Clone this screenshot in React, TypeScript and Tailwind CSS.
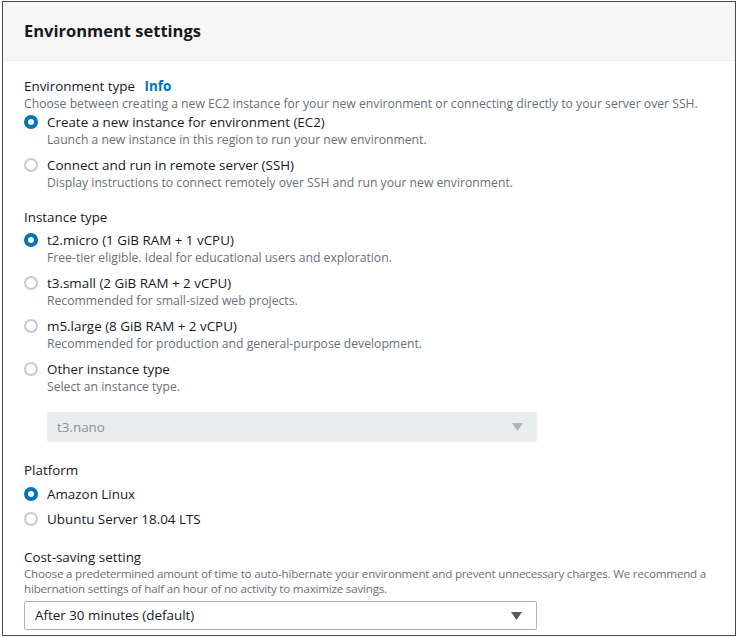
import React from 'react';

type Opt = { label: string; desc?: string; checked?: boolean };

const Radio: React.FC<{ checked?: boolean }> = ({ checked }) =>
  checked ? (
    <span className="mt-[3px] w-[14px] h-[14px] rounded-full bg-[#0073bb] flex items-center justify-center shrink-0">
      <span className="w-[6px] h-[6px] rounded-full bg-white" />
    </span>
  ) : (
    <span className="mt-[3px] w-[14px] h-[14px] rounded-full border-2 border-[#c5ccd0] bg-white shrink-0" />
  );

const RadioItem: React.FC<Opt> = ({ label, desc, checked }) => (
  <div className="flex items-start gap-[9px]">
    <Radio checked={checked} />
    <div>
      <div className="text-[13.4px] leading-[20px] text-[#16191f]">{label}</div>
      {desc && <div className="text-[12.2px] leading-[15px] text-[#687078]">{desc}</div>}
    </div>
  </div>
);

const Arrow: React.FC<{ color: string }> = ({ color }) => (
  <svg width="11" height="8" viewBox="0 0 11 8">
    <path d="M0 0 L11 0 L5.5 8 Z" fill={color} />
  </svg>
);

const App: React.FC = () => {
  return (
    <div className="w-[737px] h-[638px] bg-white pt-[1px] pl-[2px]" style={{ fontFamily: '"Open Sans", sans-serif' }}>
      <div className="w-[734px] h-[635px] border border-[#4a4a4a] overflow-hidden">
        <div className="h-[59px] bg-[#f7f7f7] border-b border-[#eaeded] px-[21px] flex items-center">
          <h1 className="text-[16.5px] font-bold text-[#16191f]">Environment settings</h1>
        </div>

        <div className="pl-[21px] pr-[12px] pt-[15px]">
          {/* Environment type */}
          <div className="text-[13.4px] leading-[20px] text-[#16191f]">
            Environment type <span className="ml-[6px] font-bold text-[#0073bb]">Info</span>
          </div>
          <div className="text-[12.2px] leading-[15px] text-[#687078]">
            Choose between creating a new EC2 instance for your new environment or connecting directly to your server over SSH.
          </div>
          <div className="mt-[1px] flex flex-col gap-[8px]">
            <RadioItem checked label="Create a new instance for environment (EC2)" desc="Launch a new instance in this region to run your new environment." />
            <RadioItem label="Connect and run in remote server (SSH)" desc="Display instructions to connect remotely over SSH and run your new environment." />
          </div>

          {/* Instance type */}
          <div className="mt-[17px] text-[13.4px] leading-[20px] text-[#16191f]">Instance type</div>
          <div className="mt-[3px] flex flex-col gap-[8px]">
            <RadioItem checked label="t2.micro (1 GiB RAM + 1 vCPU)" desc="Free-tier eligible. Ideal for educational users and exploration." />
            <RadioItem label="t3.small (2 GiB RAM + 2 vCPU)" desc="Recommended for small-sized web projects." />
            <RadioItem label="m5.large (8 GiB RAM + 2 vCPU)" desc="Recommended for production and general-purpose development." />
            <RadioItem label="Other instance type" desc="Select an instance type." />
          </div>
          <div className="mt-[18px] ml-[23px] w-[490px] h-[30px] bg-[#eaeded] rounded-[2px] flex items-center justify-between pl-[10px] pr-[14px]">
            <span className="text-[13.4px] text-[#879596]">t3.nano</span>
            <Arrow color="#aab7b8" />
          </div>

          {/* Platform */}
          <div className="mt-[18px] text-[13.4px] leading-[20px] text-[#16191f]">Platform</div>
          <div className="mt-[4px] flex flex-col gap-[5px]">
            <RadioItem checked label="Amazon Linux" />
            <RadioItem label="Ubuntu Server 18.04 LTS" />
          </div>

          {/* Cost-saving */}
          <div className="mt-[19px] text-[13.4px] leading-[18px] text-[#16191f]">Cost-saving setting</div>
          <div className="text-[11.6px] leading-[15px] tracking-[-0.2px] text-[#687078] whitespace-nowrap">
            <div>Choose a predetermined amount of time to auto-hibernate your environment and prevent unnecessary charges. We recommend a</div>
            <div>hibernation settings of half an hour of no activity to maximize savings.</div>
          </div>
          <div className="mt-[5px] w-[513px] h-[29px] border border-[#aab7b8] rounded-[2px] flex items-center justify-between pl-[10px] pr-[14px]">
            <span className="text-[13.4px] text-[#16191f]">After 30 minutes (default)</span>
            <Arrow color="#545b64" />
          </div>
        </div>
      </div>
    </div>
  );
};

export default App;
